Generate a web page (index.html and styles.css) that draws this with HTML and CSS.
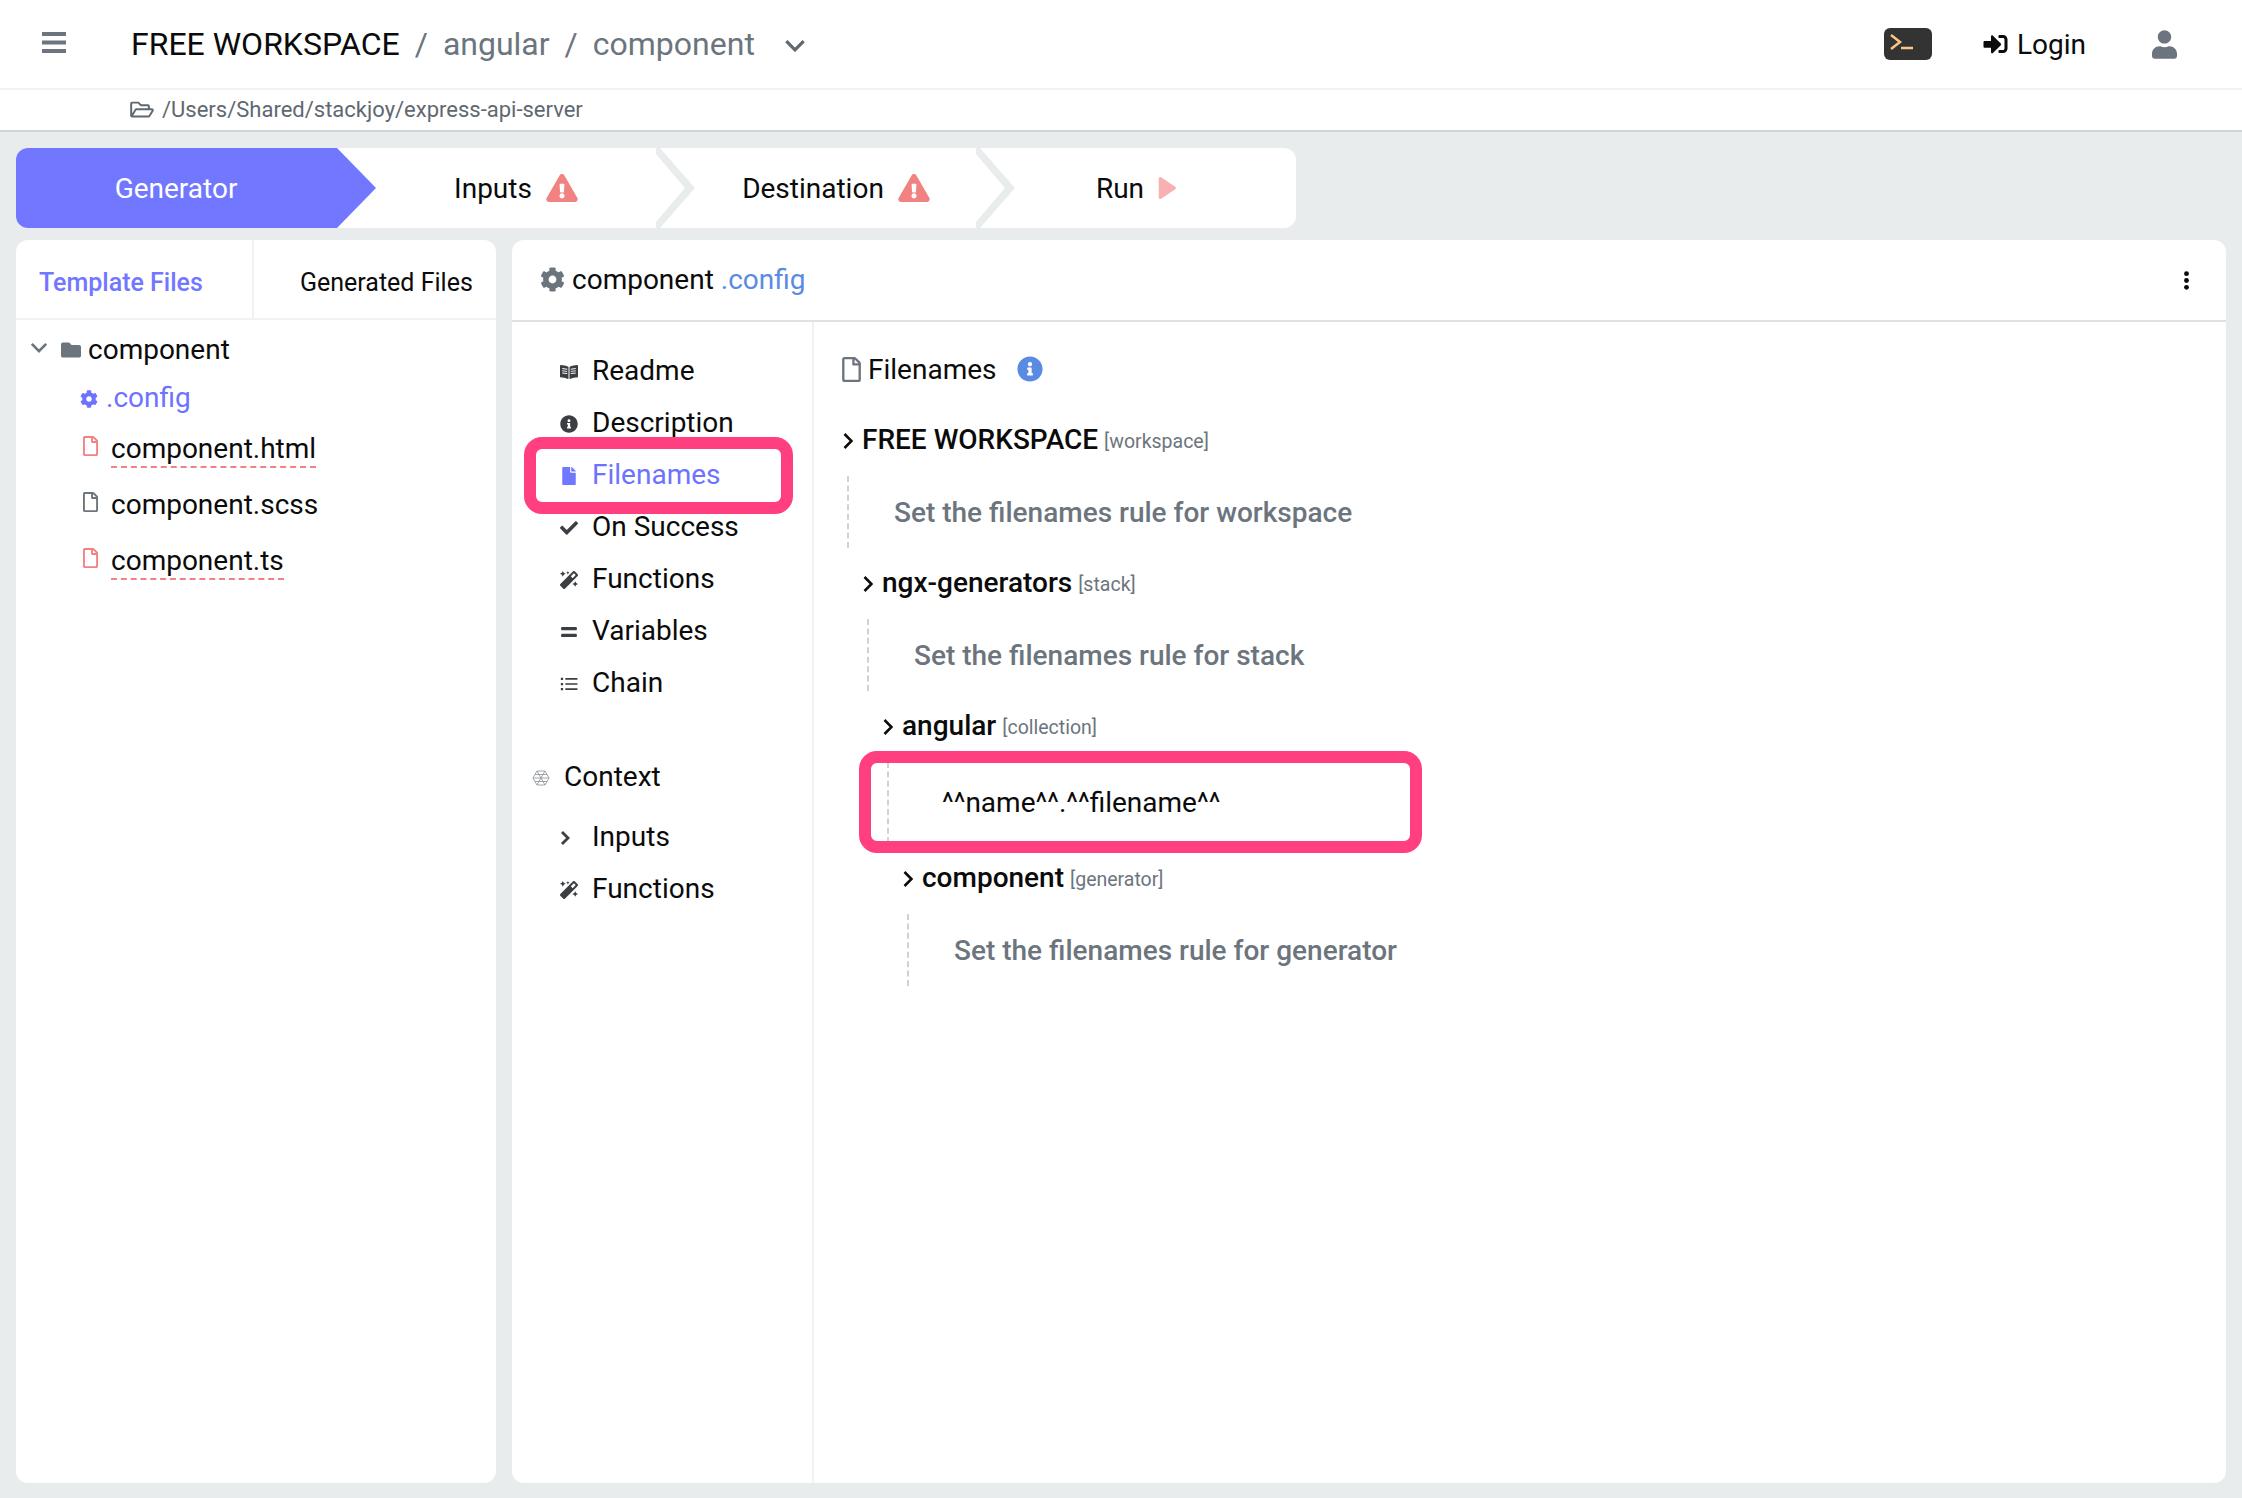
FILE: index.html
```html
<!DOCTYPE html>
<html>
<head>
  <title>Filenames</title>
  <link rel="stylesheet" href="styles.css">
</head>
<body>
  <svg class="sprite" xmlns="http://www.w3.org/2000/svg">
    <symbol id="warn" viewBox="0 0 576 512"><path d="M569.517 440.013C587.975 472.007 564.806 512 527.94 512H48.054c-36.937 0-59.999-40.055-41.577-71.987L246.423 23.985c18.467-32.009 64.72-31.951 83.154 0l239.94 416.028zM288 354c-25.405 0-46 20.595-46 46s20.595 46 46 46 46-20.595 46-46-20.595-46-46-46zm-43.673-165.346l7.418 136c.347 6.364 5.609 11.346 11.982 11.346h48.546c6.373 0 11.635-4.982 11.982-11.346l7.418-136c.375-6.874-5.098-12.654-11.982-12.654h-63.383c-6.884 0-12.356 5.78-11.981 12.654z"/></symbol>
    <symbol id="cog" viewBox="0 0 512 512"><path d="M487.4 315.7l-42.6-24.6c4.3-23.2 4.3-47 0-70.2l42.6-24.6c4.9-2.8 7.1-8.6 5.5-14-11.1-35.6-30-67.8-54.7-94.6-3.8-4.1-10-5.1-14.8-2.3L380.8 110c-17.9-15.4-38.5-27.3-60.8-35.1V25.8c0-5.6-3.9-10.5-9.4-11.7-36.7-8.2-74.3-7.8-109.2 0-5.5 1.2-9.4 6.1-9.4 11.7V75c-22.2 7.9-42.8 19.8-60.8 35.1L88.7 85.5c-4.9-2.8-11-1.9-14.8 2.3-24.7 26.7-43.6 58.9-54.7 94.6-1.7 5.4.6 11.2 5.5 14L67.3 221c-4.3 23.2-4.3 47 0 70.2l-42.6 24.6c-4.9 2.8-7.1 8.6-5.5 14 11.1 35.6 30 67.8 54.7 94.6 3.8 4.1 10 5.1 14.8 2.3l42.6-24.6c17.9 15.4 38.5 27.3 60.8 35.1v49.2c0 5.6 3.9 10.5 9.4 11.7 36.7 8.2 74.3 7.8 109.2 0 5.5-1.2 9.4-6.1 9.4-11.7v-49.2c22.2-7.9 42.8-19.8 60.8-35.1l42.6 24.6c4.9 2.8 11 1.9 14.8-2.3 24.7-26.7 43.6-58.9 54.7-94.6 1.5-5.5-.7-11.3-5.6-14.1zM256 336c-44.1 0-80-35.9-80-80s35.9-80 80-80 80 35.9 80 80-35.9 80-80 80z"/></symbol>
    <symbol id="user" viewBox="0 0 448 512"><path d="M224 240c66 0 120-54 120-120S290 0 224 0 104 54 104 120s54 120 120 120zm90 48h-16c-22 10-47 16-74 16s-52-6-74-16h-16C60 288 0 348 0 422v42c0 27 21 48 48 48h352c27 0 48-21 48-48v-42c0-74-60-134-134-134z"/></symbol>
    <symbol id="login" viewBox="0 0 512 512"><path d="M416 448h-84c-6.6 0-12-5.4-12-12v-40c0-6.6 5.4-12 12-12h84c17.7 0 32-14.3 32-32V160c0-17.7-14.3-32-32-32h-84c-6.6 0-12-5.4-12-12V76c0-6.6 5.4-12 12-12h84c53 0 96 43 96 96v192c0 53-43 96-96 96zm-47-201L201 79c-15-15-41-4.5-41 17v96H24c-13.3 0-24 10.7-24 24v96c0 13.3 10.7 24 24 24h136v96c0 21.5 26 32 41 17l168-168c9.3-9.4 9.3-24.6 0-34z"/></symbol>
    <symbol id="folder" viewBox="0 0 512 512"><path d="M464 128H272l-64-64H48C21.49 64 0 85.49 0 112v288c0 26.51 21.49 48 48 48h416c26.51 0 48-21.49 48-48V176c0-26.51-21.49-48-48-48z"/></symbol>
    <symbol id="folder-open" viewBox="0 0 576 512"><path d="M527.9 224H480v-48c0-26.5-21.5-48-48-48H272l-64-64H48C21.5 64 0 85.5 0 112v288c0 26.5 21.5 48 48 48h400c16.5 0 31.9-8.5 40.7-22.6l79.9-128c20-31.9-3-73.4-40.7-73.4zM48 118c0-3.3 2.7-6 6-6h134.1l64 64H426c3.3 0 6 2.7 6 6v42H152c-16.8 0-32.4 8.8-41.1 23.2L48 351.4zm400 282H72l77.2-128H528z"/></symbol>
    <symbol id="file" viewBox="0 0 384 512"><path d="M224 136V0H24C10.7 0 0 10.7 0 24v464c0 13.3 10.7 24 24 24h336c13.3 0 24-10.7 24-24V160H248c-13.2 0-24-10.8-24-24zm160-14.1v6.1H256V0h6.1c6.4 0 12.5 2.5 17 7l97.9 98c4.5 4.5 7 10.6 7 16.9z"/></symbol>
    <symbol id="file-line" viewBox="0 0 384 512"><path d="M369.9 97.9L286 14C277 5 264.8-.1 252.1-.1H48C21.5 0 0 21.5 0 48v416c0 26.5 21.5 48 48 48h288c26.5 0 48-21.5 48-48V131.9c0-12.7-5.1-25-14.1-34zM332.1 128H256V51.9l76.1 76.1zM48 464V48h160v104c0 13.3 10.7 24 24 24h104v288H48z"/></symbol>
    <symbol id="info" viewBox="0 0 512 512"><path d="M256 8C119.043 8 8 119.083 8 256c0 136.997 111.043 248 248 248s248-111.003 248-248C504 119.083 392.957 8 256 8zm0 110c23.196 0 42 18.804 42 42s-18.804 42-42 42-42-18.804-42-42 18.804-42 42-42zm56 254c0 6.627-5.373 12-12 12h-88c-6.627 0-12-5.373-12-12v-24c0-6.627 5.373-12 12-12h12v-64h-12c-6.627 0-12-5.373-12-12v-24c0-6.627 5.373-12 12-12h64c6.627 0 12 5.373 12 12v100h12c6.627 0 12 5.373 12 12v24z"/></symbol>
    <symbol id="check" viewBox="0 0 512 512"><path d="M173.898 439.404l-166.4-166.4c-9.997-9.997-9.997-26.206 0-36.204l36.203-36.204c9.997-9.998 26.207-9.998 36.204 0L192 312.69 432.095 72.596c9.997-9.997 26.207-9.997 36.204 0l36.203 36.204c9.997 9.997 9.997 26.206 0 36.204l-294.4 294.401c-9.998 9.997-26.207 9.997-36.204-.001z"/></symbol>
    <symbol id="equals" viewBox="0 0 448 512"><path d="M416 304H32c-17.67 0-32 14.33-32 32v32c0 17.67 14.33 32 32 32h384c17.67 0 32-14.33 32-32v-32c0-17.67-14.33-32-32-32zm0-192H32c-17.67 0-32 14.33-32 32v32c0 17.67 14.33 32 32 32h384c17.67 0 32-14.33 32-32v-32c0-17.67-14.33-32-32-32z"/></symbol>
    <symbol id="book" viewBox="0 0 576 512"><path fill-rule="evenodd" d="M542 32c-55 3-164 14-231 56-5 3-7 8-7 13v364c0 11 13 19 23 13 69-35 169-44 219-47 17-1 30-14 30-30V63c0-18-15-32-34-31zM344 150l160-20v30l-160 20zm0 70l160-20v30l-160 20zm0 70l160-20v30l-160 20zM265 88C198 46 89 35 34 32 15 31 0 45 0 63v338c0 16 13 30 30 30 49 3 150 12 219 47 11 5 23-2 23-13V101c0-5-3-10-7-13zM232 180 72 160v-30l160 20zm0 70L72 230v-30l160 20zm0 70L72 300v-30l160 20z"/></symbol>
    <symbol id="wand" viewBox="0 0 512 512"><path d="M224 96l16-32 32-16-32-16-16-32-16 32-32 16 32 16 16 32zM80 160l26.66-53.33L160 80l-53.34-26.67L80 0 53.34 53.33 0 80l53.34 26.67L80 160zm352 128l-26.66 53.33L352 368l53.34 26.67L432 448l26.66-53.33L512 368l-53.34-26.67L432 288zm70.62-193.77L417.77 9.38C411.53 3.12 403.34 0 395.15 0c-8.19 0-16.38 3.12-22.63 9.38L9.38 372.52c-12.5 12.5-12.5 32.76 0 45.25l84.85 84.85c6.25 6.25 14.44 9.37 22.62 9.37 8.19 0 16.38-3.12 22.63-9.37l363.14-363.15c12.5-12.48 12.5-32.75 0-45.24zM359.45 203.46l-50.91-50.91 86.6-86.6 50.91 50.91-86.6 86.6z"/></symbol>
    <symbol id="list" viewBox="0 0 512 512"><path d="M24 80h64v64H24zM24 224h64v64H24zM24 368h64v64H24zM152 88h344v48H152zM152 232h344v48H152zM152 376h344v48H152z"/></symbol>
    <symbol id="play" viewBox="0 0 24 30"><path d="M1 2.5C1 .8 2.6 0 4 .8l19 12.6c1.2.8 1.2 2.4 0 3.200L4 29.200C2.600 30 1 29.200 1 27.500z"/></symbol>
  </svg>

  <header class="topbar">
    <svg class="burger" viewBox="0 0 24 21"><path d="M0 0h24v4H0zM0 8.500h24v4H0zM0 17h24v4H0z"/></svg>
    <div class="crumbs">
      <span class="crumb-root">FREE WORKSPACE</span>
      <span class="crumb-sep">/</span>
      <span>angular</span>
      <span class="crumb-sep">/</span>
      <span>component</span>
      <svg class="crumb-caret" viewBox="0 0 20 12"><path d="M2 2l8 8 8-8"/></svg>
    </div>
    <div class="top-actions">
      <span class="terminal">
        <svg viewBox="0 0 48 32"><path d="M7 7l9 7-9 7M17 20h12"/></svg>
      </span>
      <span class="login"><svg class="login-icon"><use href="#login"/></svg>Login</span>
      <svg class="user-icon"><use href="#user"/></svg>
    </div>
  </header>

  <div class="pathbar">
    <svg class="path-icon"><use href="#folder-open"/></svg>
    /Users/Shared/stackjoy/express-api-server
  </div>

  <div class="steps">
    <div class="step step-active">Generator</div>
    <div class="step step-pad step-line">Inputs <svg class="warn-icon"><use href="#warn"/></svg></div>
    <div class="step step-pad step-line">Destination <svg class="warn-icon"><use href="#warn"/></svg></div>
    <div class="step">Run <svg class="play-icon"><use href="#play"/></svg></div>
  </div>

  <div class="workspace">
    <aside class="panel files">
      <div class="tabs">
        <div class="tab tab-active">Template Files</div>
        <div class="tab">Generated Files</div>
      </div>
      <div class="tree-folder">
        <svg class="tree-caret" viewBox="0 0 20 12"><path d="M2 2l8 8 8-8"/></svg>
        <svg class="folder-icon"><use href="#folder"/></svg>
        component
      </div>
      <div class="tree-config"><svg class="config-icon"><use href="#cog"/></svg>.config</div>
      <div class="tree-file">
        <svg class="file-icon file-error"><use href="#file-line"/></svg>
        <span class="file-name name-error">component.html</span>
      </div>
      <div class="tree-file">
        <svg class="file-icon"><use href="#file-line"/></svg>
        <span class="file-name">component.scss</span>
      </div>
      <div class="tree-file">
        <svg class="file-icon file-error"><use href="#file-line"/></svg>
        <span class="file-name name-error">component.ts</span>
      </div>
    </aside>

    <main class="panel detail">
      <div class="detail-head">
        <svg class="head-cog"><use href="#cog"/></svg>
        <span>component</span>
        <span class="head-config">.config</span>
        <svg class="kebab" viewBox="0 0 6 18"><circle cx="3" cy="2.500" r="2.300"/><circle cx="3" cy="9" r="2.300"/><circle cx="3" cy="15.500" r="2.300"/></svg>
      </div>
      <div class="detail-body">
        <nav class="menu">
          <div class="menu-item"><svg class="menu-icon"><use href="#book"/></svg>Readme</div>
          <div class="menu-item"><svg class="menu-icon"><use href="#info"/></svg>Description</div>
          <div class="menu-item menu-active marked"><svg class="menu-icon icon-file"><use href="#file"/></svg>Filenames</div>
          <div class="menu-item"><svg class="menu-icon"><use href="#check"/></svg>On Success</div>
          <div class="menu-item"><svg class="menu-icon"><use href="#wand"/></svg>Functions</div>
          <div class="menu-item"><svg class="menu-icon"><use href="#equals"/></svg>Variables</div>
          <div class="menu-item"><svg class="menu-icon"><use href="#list"/></svg>Chain</div>
          <div class="menu-group">
            <svg class="context-icon" viewBox="0 0 18 16"><path d="M5 1h8l4 7-4 7H5L1 8zM5 1l8 14M13 1L5 15M1 8h16M3 4.500h12M3 11.500h12"/></svg>
            Context
          </div>
          <div class="menu-item">
            <svg class="menu-icon icon-caret" viewBox="0 0 12 18"><path d="M2 3l6 6-6 6"/></svg>Inputs
          </div>
          <div class="menu-item"><svg class="menu-icon"><use href="#wand"/></svg>Functions</div>
        </nav>

        <section class="rules">
          <h2 class="rules-title">
            <svg class="rules-file"><use href="#file-line"/></svg>
            Filenames
            <svg class="rules-info"><use href="#info"/></svg>
          </h2>

          <div class="rule">
            <div class="rule-title">
              <svg class="rule-caret" viewBox="0 0 10 16"><path d="M1.500 1l7 7-7 7"/></svg>
              <b>FREE WORKSPACE</b><small>[workspace]</small>
            </div>
            <div class="rule-body">Set the filenames rule for workspace</div>

            <div class="rule rule-nested">
              <div class="rule-title">
                <svg class="rule-caret" viewBox="0 0 10 16"><path d="M1.500 1l7 7-7 7"/></svg>
                <b>ngx-generators</b><small>[stack]</small>
              </div>
              <div class="rule-body">Set the filenames rule for stack</div>

              <div class="rule rule-nested">
                <div class="rule-title">
                  <svg class="rule-caret" viewBox="0 0 10 16"><path d="M1.500 1l7 7-7 7"/></svg>
                  <b>angular</b><small>[collection]</small>
                </div>
                <div class="rule-body rule-filled marked">^^name^^.^^filename^^</div>

                <div class="rule rule-nested">
                  <div class="rule-title">
                    <svg class="rule-caret" viewBox="0 0 10 16"><path d="M1.500 1l7 7-7 7"/></svg>
                    <b>component</b><small>[generator]</small>
                  </div>
                  <div class="rule-body">Set the filenames rule for generator</div>
                </div>
              </div>
            </div>
          </div>
        </section>
      </div>
    </main>
  </div>
</body>
</html>
```

FILE: styles.css
```css
*,
*::after {
  box-sizing: border-box;
}

html,
body {
  height: 100%;
}

body {
  margin: 0;
  display: flex;
  flex-direction: column;
  background-color: #e9ecec;
  color: #0b0b0b;
  font-family: Roboto, "Liberation Sans", sans-serif;
  font-size: 28px;
  overflow: hidden;
}

svg {
  fill: currentColor;
  flex: none;
}

.sprite {
  display: none;
}

/* top bar */
.topbar {
  display: flex;
  align-items: center;
  height: 90px;
  padding-left: 42px;
  background-color: #fff;
  border-bottom: 2px solid #f1f2f2;
}

.burger {
  width: 24px;
  height: 21px;
  margin-top: -4px;
  color: #6c757d;
}

.crumbs {
  display: flex;
  align-items: center;
  gap: 15px;
  margin-left: 65px;
  font-size: 32px;
  color: #6c757d;
}

.crumb-root {
  color: #0b0b0b;
}

.crumb-caret {
  width: 22px;
  height: 13px;
  margin-left: 14px;
  margin-top: 3px;
  fill: none;
  stroke: #5f6870;
  stroke-width: 3;
}

.top-actions {
  display: flex;
  align-items: center;
  margin-left: auto;
  padding-right: 65px;
}

.terminal {
  display: flex;
  width: 48px;
  height: 32px;
  border-radius: 6px;
  background-color: #333;
}

.terminal svg {
  width: 48px;
  height: 32px;
  fill: none;
  stroke: #fbc582;
  stroke-width: 2.500;
}

.login {
  display: flex;
  align-items: center;
  gap: 7px;
  margin-left: 49px;
}

.login-icon {
  width: 29px;
  height: 24px;
}

.user-icon {
  width: 25px;
  height: 29px;
  margin-left: 66px;
  color: #6c757d;
}

/* path */
.pathbar {
  display: flex;
  align-items: center;
  gap: 8px;
  height: 42px;
  padding-left: 130px;
  padding-bottom: 2px;
  background-color: #fff;
  border-bottom: 2px solid #d2d5d5;
  font-size: 22px;
  color: #5f6870;
}

.path-icon {
  width: 24px;
  height: 21px;
}

/* steps */
.steps {
  display: flex;
  width: 1280px;
  height: 80px;
  margin: 16px 0 12px 16px;
  background-color: #fff;
  border-radius: 12px;
}

.step {
  position: relative;
  display: flex;
  align-items: center;
  justify-content: center;
  gap: 14px;
  width: 320px;
}

.step-pad {
  padding-left: 40px;
}

.step-active {
  color: #fff;
  background-color: #7177ff;
  border-radius: 12px 0 0 12px;
}

.step-active::after {
  content: "";
  position: absolute;
  left: 100%;
  top: 0;
  width: 40px;
  height: 80px;
  background-color: #7177ff;
  clip-path: polygon(0 0, 1px 0, 40px 40px, 1px 80px, 0 80px);
}

.step-line::after {
  content: "";
  position: absolute;
  left: 100%;
  top: 0;
  width: 40px;
  height: 80px;
  background-color: #e9ecec;
  clip-path: polygon(0 0, 4px 0, 39px 40px, 4px 80px, 0 80px, 0 74px, 29px 40px, 0 6px);
}

.warn-icon {
  width: 32px;
  height: 28px;
  color: #f28182;
}

.play-icon {
  width: 18px;
  height: 24px;
  color: #f9b0b2;
}

/* panels */
.workspace {
  display: flex;
  flex: 1;
  gap: 16px;
  padding: 0 16px 15px;
  min-height: 0;
}

.panel {
  background-color: #fff;
  border-radius: 12px;
}

.files {
  width: 480px;
}

.tabs {
  display: flex;
  height: 80px;
  padding-top: 6px;
  border-bottom: 2px solid #f1f2f2;
  font-size: 25px;
}

.tab {
  display: flex;
  align-items: center;
  padding-left: 46px;
  flex: 1;
}

.tab-active {
  flex: none;
  width: 238px;
  margin-top: -6px;
  padding: 6px 0 0 23px;
  border-right: 2px solid #f1f2f2;
  color: #7177ff;
  font-weight: 500;
}

.tree-folder {
  display: flex;
  align-items: center;
  height: 48px;
  margin-top: 5px;
  padding-left: 14px;
}

.tree-caret {
  width: 18px;
  height: 11px;
  margin-top: -3px;
  fill: none;
  stroke: #6c757d;
  stroke-width: 3;
}

.folder-icon {
  width: 20px;
  height: 20px;
  margin: 2px 7px 0 13px;
  color: #6c757d;
}

.tree-config {
  display: flex;
  align-items: center;
  gap: 8px;
  height: 48px;
  padding-left: 64px;
  color: #6d72ff;
}

.config-icon {
  width: 18px;
  height: 18px;
  margin-top: 3px;
}

.tree-file {
  display: flex;
  align-items: center;
  gap: 13px;
  height: 56px;
  padding-left: 67px;
}

.file-icon {
  width: 15px;
  height: 20px;
  margin-top: -6px;
  color: #6c757d;
}

.file-error {
  color: #f28182;
}

.file-name {
  line-height: 34px;
}

.name-error {
  border-top: 2px solid transparent;
  border-bottom: 2px dashed #f28182;
}

/* detail panel */
.detail {
  display: flex;
  flex: 1;
  flex-direction: column;
}

.detail-head {
  display: flex;
  align-items: center;
  gap: 7px;
  height: 82px;
  padding: 0 36px 2px 28px;
  border-bottom: 2px solid #dee2e6;
}

.head-cog {
  width: 25px;
  height: 25px;
  color: #6c757d;
}

.head-config {
  color: #5a8be3;
}

.kebab {
  width: 7px;
  height: 19px;
  margin-top: 3px;
  margin-left: auto;
}

.detail-body {
  display: flex;
  flex: 1;
}

.menu {
  width: 302px;
  padding: 22px 0 0 48px;
  border-right: 2px solid #f1f2f2;
}

.menu-item {
  position: relative;
  display: flex;
  align-items: center;
  height: 52px;
}

.menu-icon {
  width: 18px;
  height: 18px;
  margin: 4px 14px 0 0;
  color: #3b3f43;
}

.icon-file {
  color: #7177ff;
}

.icon-caret {
  width: 12px;
  margin-right: 20px;
  fill: none;
  stroke: #3b3f43;
  stroke-width: 2.800;
}

.menu-active {
  color: #6d72ff;
}

.menu-group {
  display: flex;
  align-items: center;
  height: 52px;
  margin: 42px 0 8px -28px;
}

.context-icon {
  width: 18px;
  height: 16px;
  margin: 4px 14px 0 0;
  fill: none;
  stroke: #8b9095;
  stroke-width: 0.800;
}

.menu-item.marked::after {
  content: "";
  position: absolute;
  left: -36px;
  top: -11px;
  width: 269px;
  height: 77px;
  border: 12px solid #ff3f7f;
  border-radius: 18px;
}

/* rules */
.rules {
  flex: 1;
  padding: 0 0 0 29px;
}

.rules-title {
  display: flex;
  align-items: center;
  gap: 7px;
  height: 44px;
  margin: 25px 0 28px -1px;
  font-size: 28px;
  font-weight: 400;
}

.rules-file {
  width: 19px;
  height: 25px;
  color: #6c757d;
}

.rules-info {
  width: 26px;
  height: 26px;
  margin-left: 13px;
  color: #5a8be3;
}

.rule-title {
  display: flex;
  align-items: center;
  height: 40px;
  margin-bottom: 17px;
}

.rule-title b {
  font-weight: 500;
}

.rule-title small {
  margin: 4px 0 0 6px;
  font-size: 19.5px;
  color: #6c757d;
}

.rule-caret {
  width: 10px;
  height: 16px;
  margin: 3px 9px 0 0;
  fill: none;
  stroke: #0b0b0b;
  stroke-width: 2.600;
}

.rule-body {
  position: relative;
  display: flex;
  align-items: center;
  height: 72px;
  margin: 0 0 14px 4px;
  padding-left: 45px;
  border-left: 2px dashed #cfd2d4;
  font-weight: 500;
  color: #6c757d;
}

.rule-nested {
  margin-left: 20px;
}

.rule-filled {
  height: 81px;
  padding-left: 53px;
  font-weight: 400;
  color: #0b0b0b;
}

.rule-body.marked::after {
  content: "";
  position: absolute;
  left: -30px;
  top: -11px;
  width: 563px;
  height: 102px;
  border: 12px solid #ff3f7f;
  border-radius: 18px;
}
```
